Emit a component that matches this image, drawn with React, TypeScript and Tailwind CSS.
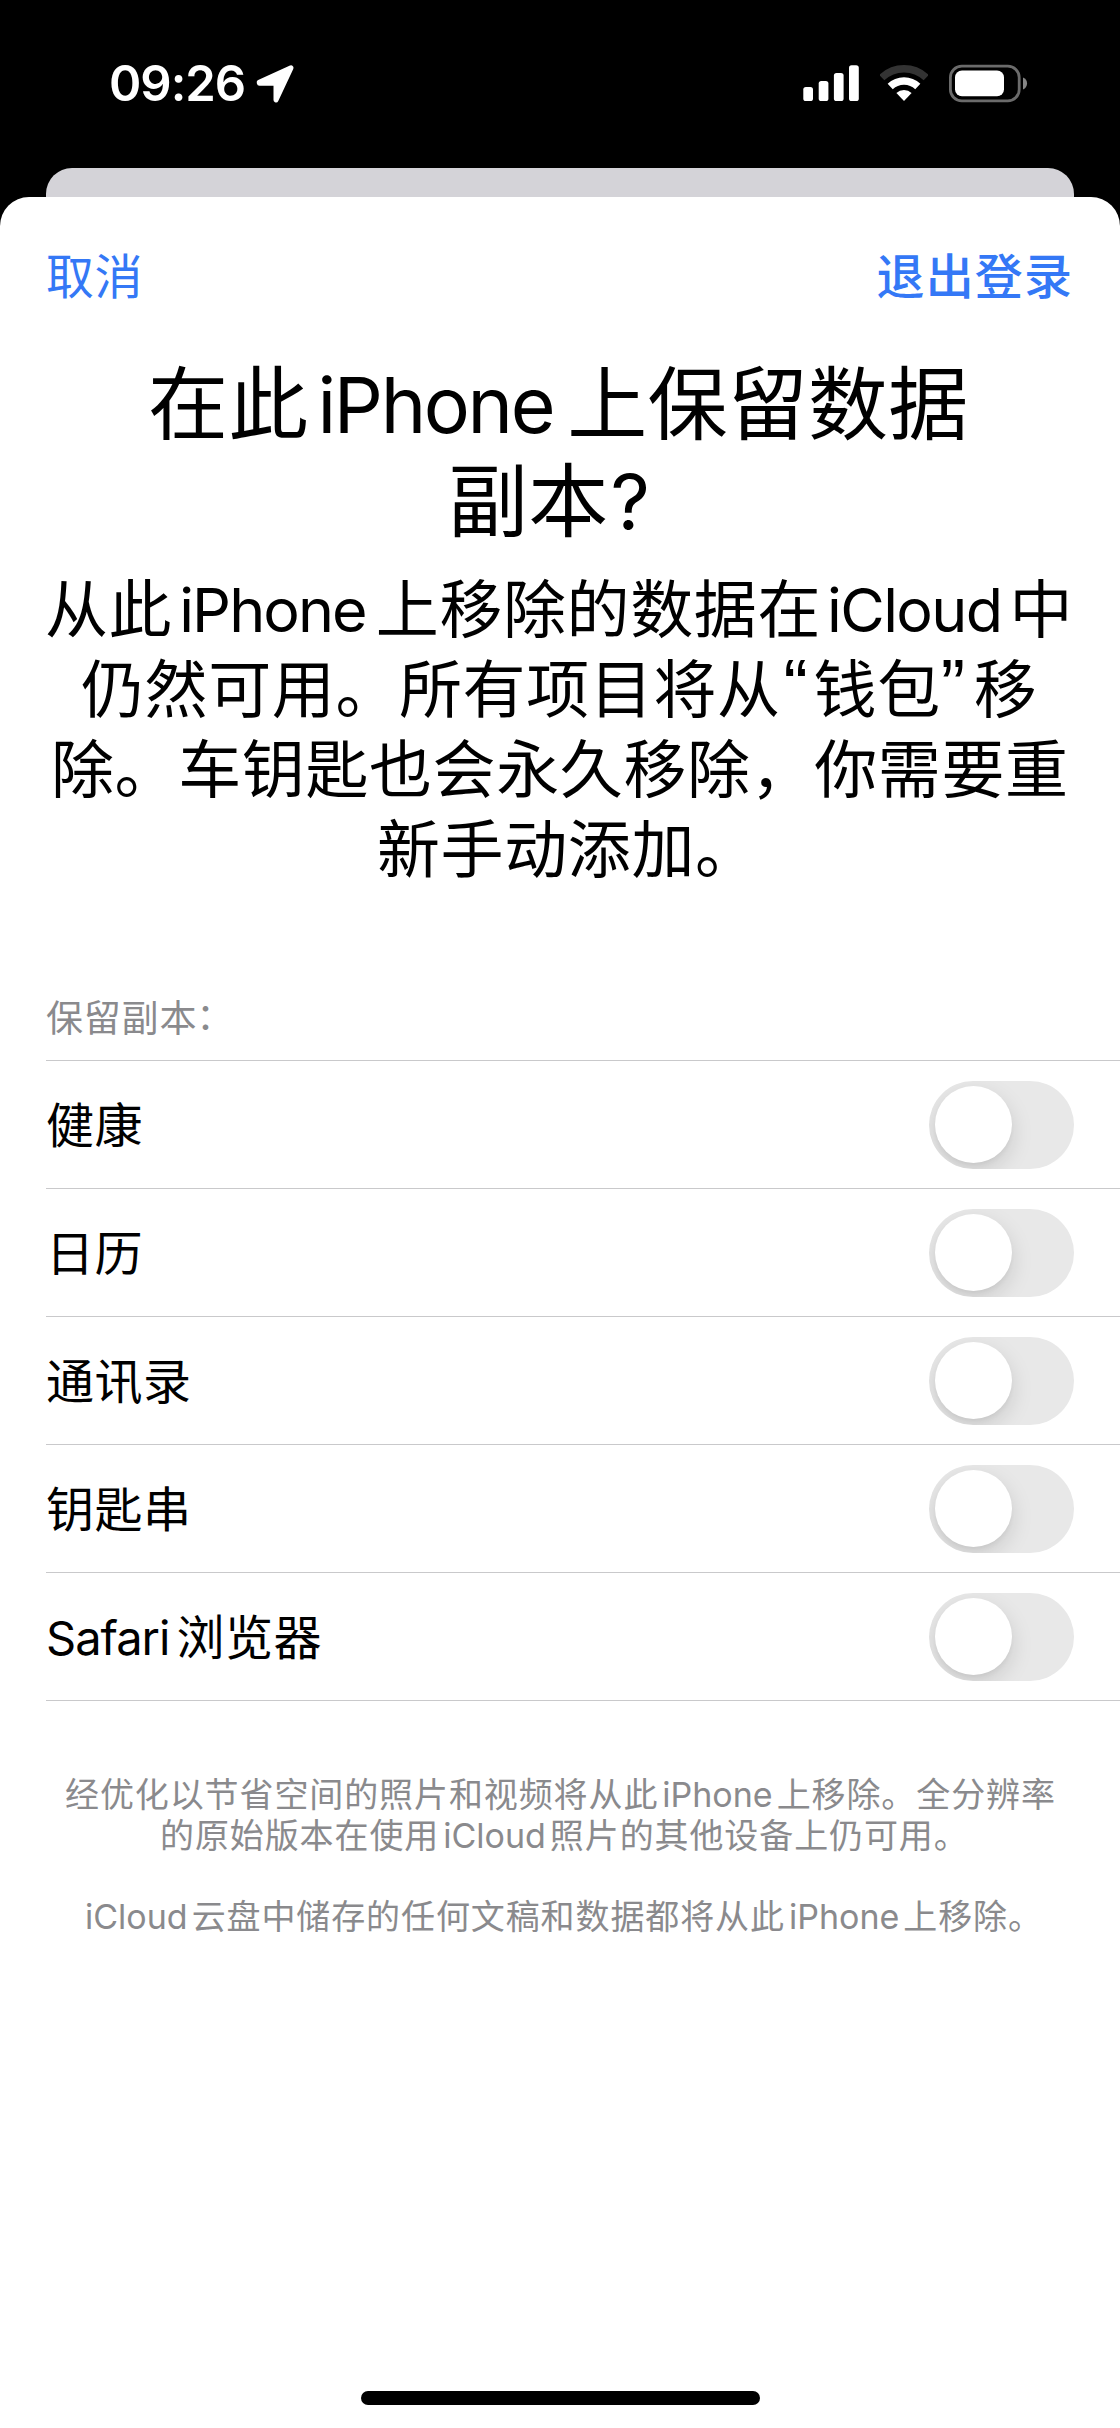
import { useState } from "react"

const toggleItems = [
  { key: "health", latin: "", label: "健康" },
  { key: "calendar", latin: "", label: "日历" },
  { key: "contacts", latin: "", label: "通讯录" },
  { key: "keychain", latin: "", label: "钥匙串" },
  { key: "safari", latin: "Safari", label: "浏览器" },
]

function StatusBar() {
  return (
    <div className="flex h-[168px] items-start justify-between pl-[109px] pr-[92px] text-white">
      <div className="flex pt-[60px]">
        <span className="w-[147px] whitespace-nowrap text-[49px] font-semibold leading-[48px] tracking-[-1px]">09:26</span>
        <svg className="mt-[4px] h-[40px] w-[40px]" viewBox="0 0 40 40" fill="currentColor">
          <path
            d="M3.2 18.2 35 3.9 20 36V19.2H3.4Z"
            stroke="currentColor"
            strokeWidth="5"
            strokeLinejoin="round"
          />
        </svg>
      </div>
      <div className="flex pt-[64px]">
        <svg className="h-[40px] w-[57px]" viewBox="0 0 57 40" fill="currentColor">
          <rect x="0.3" y="23" width="9.7" height="14" rx="2.6" />
          <rect x="15.7" y="17" width="9.7" height="20" rx="2.6" />
          <rect x="30.9" y="9" width="9.7" height="28" rx="2.6" />
          <rect x="46" y="1.3" width="9.8" height="35.7" rx="2.6" />
        </svg>
        <svg className="ml-[20px] h-[40px] w-[48px]" viewBox="0 0 48 40" fill="none" stroke="currentColor">
          <path d="M1.8 13.6a32.2 32.2 0 0 1 44.4 0" strokeWidth="7.4" className="text-[#333333]" />
          <path d="M10.2 22.5a20 20 0 0 1 27.6 0" strokeWidth="7.4" />
          <path d="M24 37 16.4 29a11.3 11.3 0 0 1 15.2 0Z" fill="currentColor" stroke="none" />
        </svg>
        <svg className="ml-[21px] h-[40px] w-[79px]" viewBox="0 0 79 40">
          <rect x="1.4" y="2.1" width="68.8" height="34.8" rx="11.4" fill="none" stroke="#6b6b6b" strokeWidth="2.8" />
          <rect x="6" y="6.4" width="49" height="25.8" rx="7" fill="#ffffff" />
          <path d="M74 13.6c5.4 1.8 5.4 10 0 11.8Z" fill="#858585" />
        </svg>
      </div>
    </div>
  )
}

function Toggle({ on, onChange }: { on: boolean; onChange: () => void }) {
  return (
    <button
      role="switch"
      aria-checked={on}
      onClick={onChange}
      className={
        on
          ? "flex h-[88px] w-[145px] items-center justify-end overflow-hidden rounded-full bg-[#34c759] px-[6px]"
          : "flex h-[88px] w-[145px] items-center overflow-hidden rounded-full bg-[#e8e8e8] px-[6px]"
      }
    >
      <span className="h-[77px] w-[77px] rounded-full bg-white shadow-[0_8px_22px_rgba(0,0,0,0.13),0_3px_4px_rgba(0,0,0,0.04)]" />
    </button>
  )
}

export default function App() {
  const [enabled, setEnabled] = useState<string[]>([])

  function toggle(key: string) {
    setEnabled((prev) => (prev.includes(key) ? prev.filter((k) => k !== key) : [...prev, key]))
  }

  return (
    <div className="flex h-[2428px] w-[1120px] flex-col overflow-hidden bg-black font-[Inter,'Noto_Sans_CJK_SC',sans-serif] text-black">
      <StatusBar />
      <div className="mx-[46px] h-[29px] shrink-0 rounded-t-[26px] bg-[#d4d3d8]" />

      <div className="flex flex-1 flex-col rounded-t-[29px] bg-white">
        <header className="flex h-[144px] items-start justify-between pl-[46px] pr-[47px] pt-[50px] text-[48px] leading-[60px] text-[#3478f6]">
          <button className="tracking-[0.5px]">取消</button>
          <button className="font-medium tracking-[1.1px]">退出登录</button>
        </header>

        <h1 className="mt-[14px] whitespace-nowrap text-[80px] leading-[97px] tracking-[0.3px]">
          <div className="pl-[148px]">
            在此<span className="ml-[9px] mr-[14px] text-[77px] leading-none tracking-[-2.4px]">iPhone</span>上保留数据
          </div>
          <div className="pl-[448px]">
            副本<span className="ml-[2px] text-[77px] leading-none">?</span>
          </div>
        </h1>

        <div className="mt-[20px] whitespace-nowrap text-[63px] leading-[80px] tracking-[0.6px]">
          <p className="pl-[45px]">
            从此<span className="ml-[7px] mr-[10px] text-[61px] leading-none tracking-[-1.9px]">iPhone</span>上移除的数据在
            <span className="ml-[6px] mr-[8px] text-[61px] leading-none tracking-[-1.6px]">iCloud</span>中
          </p>
          <p className="pl-[81px]">
            仍然可用。所有项目将从
            <span className="relative -top-[2px] ml-[3px] mr-[5px] font-['Liberation_Sans'] text-[73px] leading-none">“</span>
            钱包
            <span className="relative -top-[2px] mr-[8px] font-['Liberation_Sans'] text-[73px] leading-none">”</span>
            移
          </p>
          <p className="pl-[51px]">除。车钥匙也会永久移除，你需要重</p>
          <p className="pl-[377px]">新手动添加。</p>
        </div>

        <h2 className="mt-[106px] h-[65px] pl-[46px] text-[37px] leading-[48px] tracking-[0.8px] text-[#8a8a8d]">
          保留副本<span className="relative -left-[1px] -top-[2px]">：</span>
        </h2>
        <ul className="ml-[46px] border-t border-[#c9c9cb]">
          {toggleItems.map((item) => (
            <li
              key={item.key}
              className="flex h-[128.1px] items-center justify-between border-b border-[#c9c9cb] pr-[46px] text-[48px] leading-[60px] tracking-[0.5px]"
            >
              <span className="pt-[2px]">
                {item.latin && <span className="mr-[7px] text-[47px] leading-none tracking-[-1px]">{item.latin}</span>}
                {item.label}
              </span>
              <Toggle on={enabled.includes(item.key)} onChange={() => toggle(item.key)} />
            </li>
          ))}
        </ul>

        <div className="mt-[74px] whitespace-nowrap text-[34px] leading-[40.6px] tracking-[0.9px] text-[#8a8a8d]">
          <p className="pl-[65px]">
            经优化以节省空间的照片和视频将从此<span className="mx-[4px] tracking-[0px]">iPhone</span>上移除。全分辨率
          </p>
          <p className="pl-[160px]">
            的原始版本在使用<span className="mx-[4px] tracking-[0px]">iCloud</span>照片的其他设备上仍可用。
          </p>
          <p className="mt-[40.6px] pl-[85px]">
            <span className="mr-[4px] tracking-[0px]">iCloud</span>云盘中储存的任何文稿和数据都将从此
            <span className="mx-[4px] tracking-[0px]">iPhone</span>上移除。
          </p>
        </div>

        <div className="mx-auto mb-[23px] mt-auto h-[14px] w-[399px] rounded-full bg-black" />
      </div>
    </div>
  )
}
